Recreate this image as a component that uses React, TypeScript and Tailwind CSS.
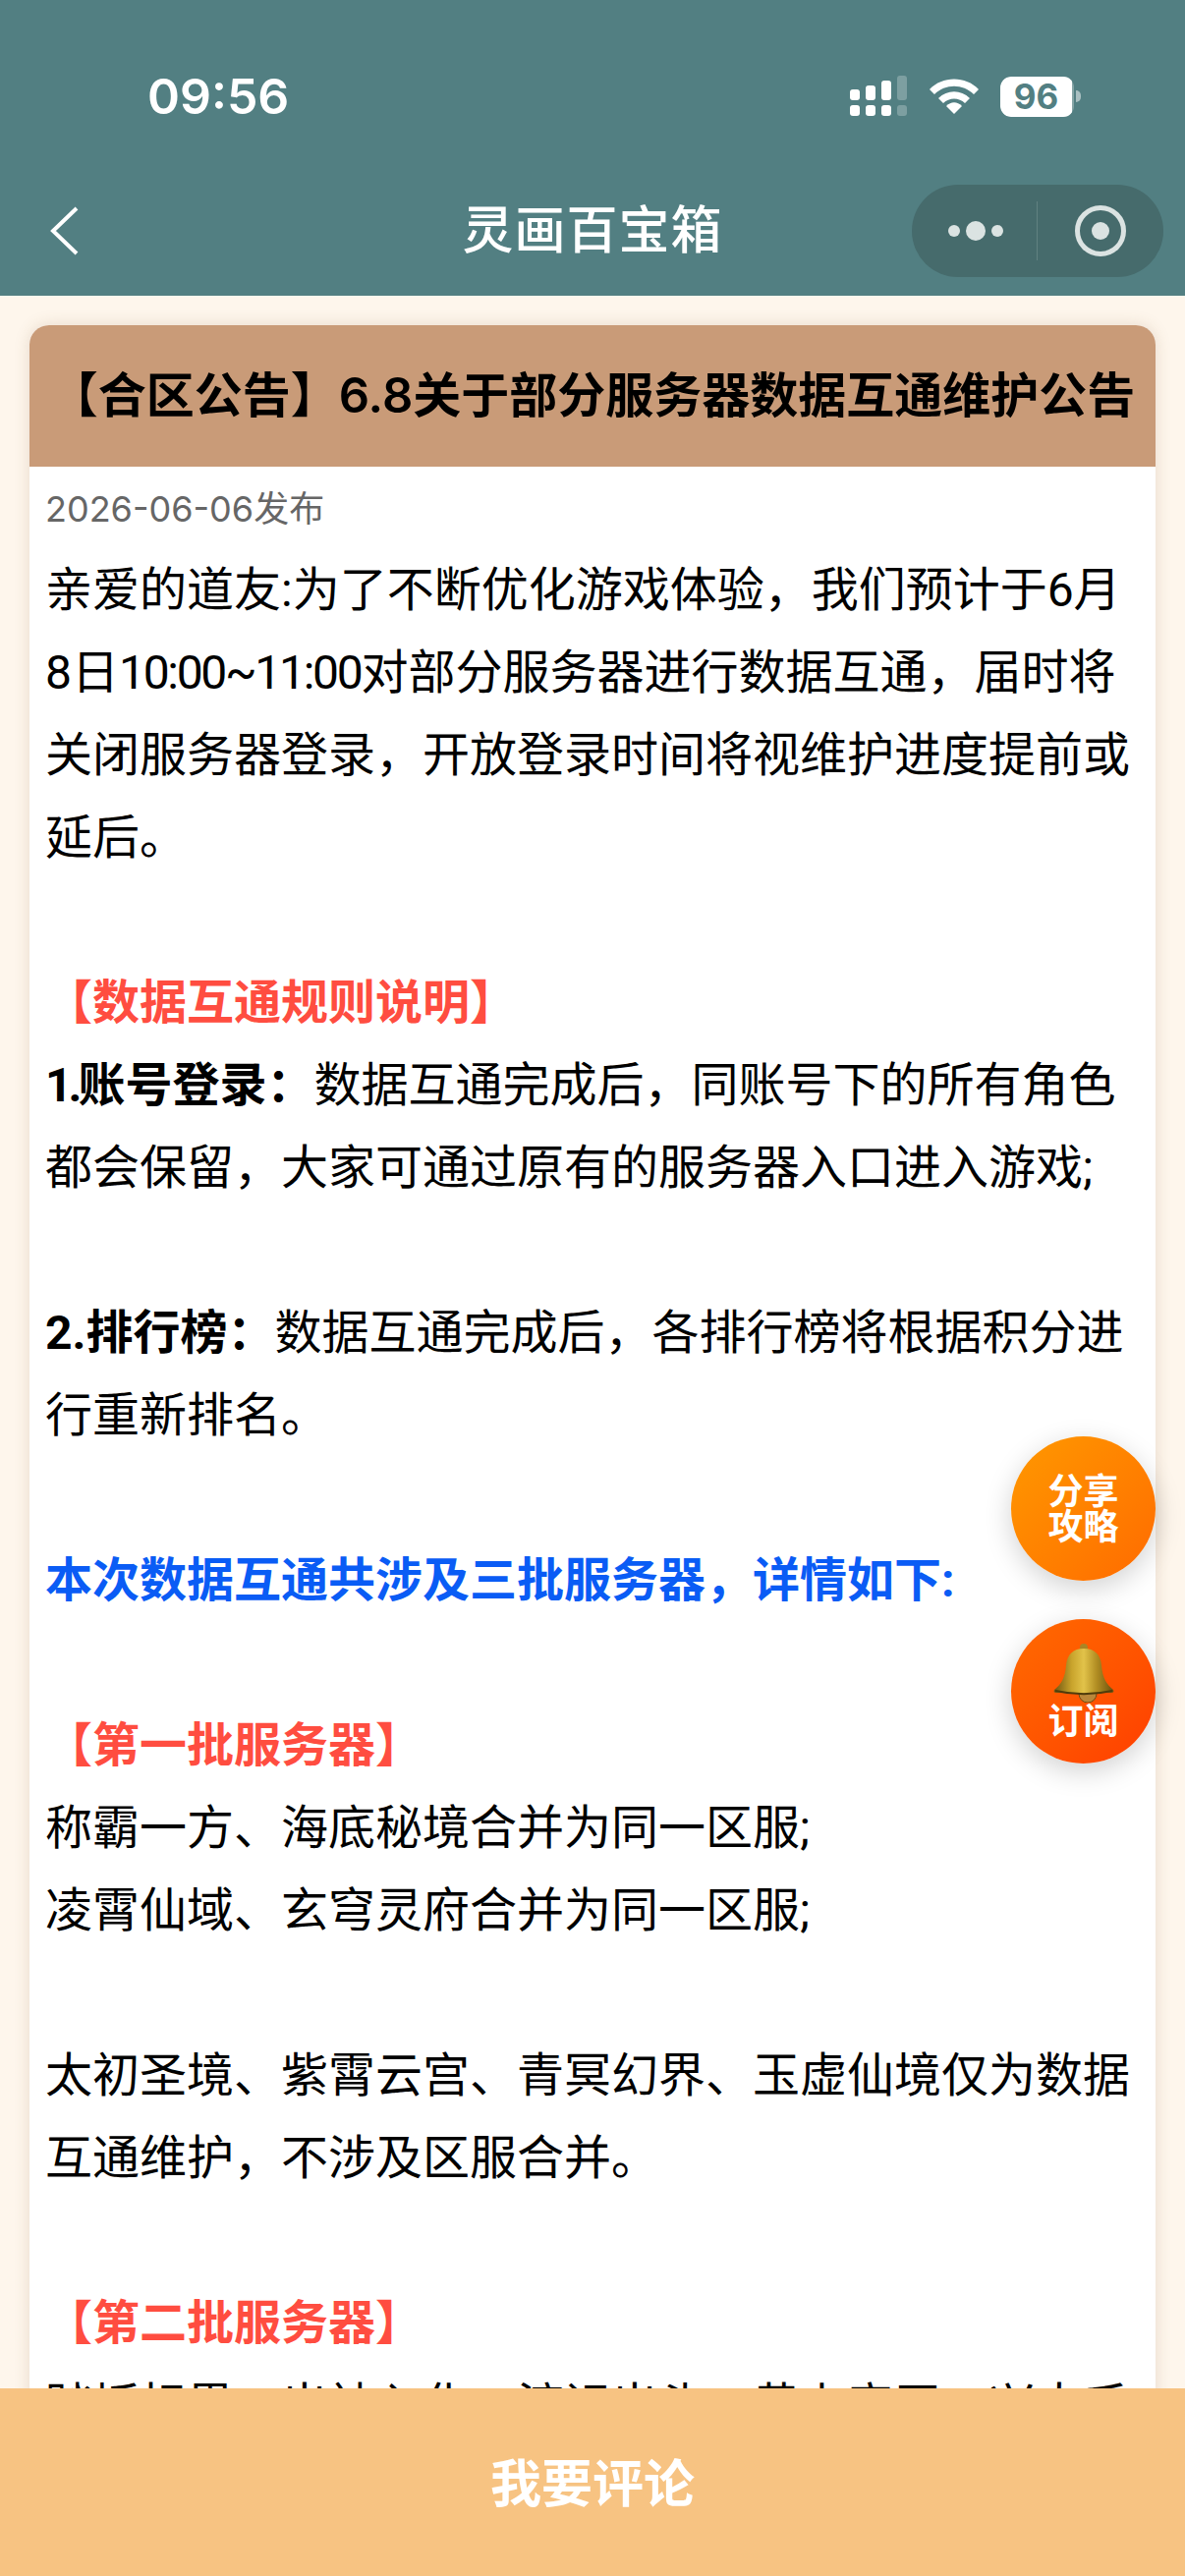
const CJK = "font-['Inter','Noto_Sans_CJK_SC',sans-serif]";

function StatusIcons() {
  return (
    <div className="flex items-center">
      <svg width="60" height="42" viewBox="0 0 60 42" fill="white">
        <rect x="0" y="14" width="10" height="11" rx="3" />
        <rect x="16" y="10" width="10" height="15" rx="3" />
        <rect x="32" y="5" width="10" height="20" rx="3" />
        <rect x="48" y="0" width="10" height="25" rx="3" opacity="0.25" />
        <rect x="0" y="30" width="10" height="11" rx="3" />
        <rect x="16" y="30" width="10" height="11" rx="3" />
        <rect x="32" y="30" width="10" height="11" rx="3" />
        <rect x="48" y="30" width="10" height="11" rx="3" opacity="0.25" />
      </svg>
      <svg className="ml-[20px]" width="52" height="38" viewBox="0 0 52 38" fill="white">
        <path d="M1 12 C14 -2 38 -2 51 12 L46 17 C35 6 17 6 6 17 Z" />
        <path d="M10 21 C19 12 33 12 42 21 L37 26 C31 20 21 20 15 26 Z" />
        <path d="M18 29 C23 24 29 24 34 29 L26 37 Z" />
      </svg>
      <div className="ml-[21px] flex items-center">
        <div className="h-[41px] w-[75px] overflow-hidden rounded-[11px] bg-white/30">
          <div className="flex h-full w-[73px] items-center justify-center rounded-l-[11px] rounded-r-[4px] bg-white text-[35px] leading-none font-bold text-[#527f82]">
            96
          </div>
        </div>
        <div className="ml-[2px] h-[12px] w-[5px] rounded-r-full bg-white/50" />
      </div>
    </div>
  );
}

function Capsule() {
  return (
    <div className="flex h-[94px] w-[256px] items-center rounded-full bg-[#466b6c]">
      <div className="flex h-[60px] w-[128px] items-center justify-center gap-[4px] border-r border-white/15 pl-[2px]">
        <svg width="64" height="20" viewBox="0 0 64 20" fill="#dbe3e2">
          <circle cx="10" cy="10" r="6" />
          <circle cx="32" cy="10" r="10" />
          <circle cx="54" cy="10" r="6" />
        </svg>
      </div>
      <div className="flex flex-1 items-center justify-center">
        <svg width="54" height="54" viewBox="0 0 54 54" fill="none">
          <circle cx="27" cy="27" r="23.5" stroke="#dbe3e2" strokeWidth="5" />
          <circle cx="27" cy="27" r="9" fill="#dbe3e2" />
        </svg>
      </div>
    </div>
  );
}

function Bell() {
  return (
    <svg width="62" height="60" viewBox="0 0 62 60">
      <defs>
        <linearGradient id="bellBody" x1="0" y1="0" x2="1" y2="0">
          <stop offset="0" stopColor="#6f5510" />
          <stop offset="0.3" stopColor="#c9a42c" />
          <stop offset="0.5" stopColor="#e2c34a" />
          <stop offset="0.72" stopColor="#b08c22" />
          <stop offset="1" stopColor="#6a500f" />
        </linearGradient>
      </defs>
      <circle cx="31" cy="4" r="4" fill="#a98525" />
      <circle cx="35" cy="51" r="9" fill="#b9873a" stroke="#6a4d16" strokeWidth="1" />
      <path
        d="M31 5 C20 5 14 11 13 22 C12 35 8 41 1 47 C0 49 1 50 3 50 L59 50 C61 50 62 49 61 47 C54 41 50 35 49 22 C48 11 42 5 31 5 Z"
        fill="url(#bellBody)"
      />
      <path d="M2 48 C20 52 42 52 60 48" stroke="#4f3c0c" strokeWidth="2" fill="none" />
    </svg>
  );
}

function Red({ children }: { children: React.ReactNode }) {
  return <p className="font-bold text-[#ff4d40]">{children}</p>;
}

const Blank = () => <p className="h-[84px]" />;

export default function App() {
  return (
    <div className={`relative flex h-[2622px] w-[1206px] flex-col overflow-hidden bg-[#fef6ec] ${CJK}`}>
      <header className="flex h-[301px] shrink-0 flex-col bg-[#527f82] text-white">
        <div className="flex h-[188px] items-start justify-between pt-[70px] pr-[106px] pl-[150px]">
          <span className="text-[50px] leading-[56px] font-semibold">09:56</span>
          <div className="pt-[7px]">
            <StatusIcons />
          </div>
        </div>
        <div className="grid grid-cols-[256px_1fr_256px] items-start px-[22px]">
          <svg className="mt-[22px] ml-[28px]" width="30" height="50" viewBox="0 0 30 50" fill="none">
            <path d="M28 2 L4 25 L28 48" stroke="white" strokeWidth="4" />
          </svg>
          <h1 className="mt-[17px] text-center text-[52px] leading-[60px] font-medium tracking-[1px]">灵画百宝箱</h1>
          <Capsule />
        </div>
      </header>

      <main className="flex-1 overflow-hidden px-[30px] pt-[30px]">
        <article className="rounded-t-[20px] bg-white shadow-[0_0_16px_rgba(120,90,50,0.18)]">
          <h2 className="flex h-[144px] items-center justify-center rounded-t-[20px] bg-[#c99b78] text-[49px] font-semibold whitespace-nowrap text-black">
            【合区公告】6.8关于部分服务器数据互通维护公告
          </h2>
          <div className="px-[16px] pt-[19px] font-['Roboto','Noto_Sans_CJK_SC',sans-serif] text-[48px] leading-[84px] text-black">
            <div className="mb-[17px] font-['Inter','Noto_Sans_CJK_SC',sans-serif] text-[36px] leading-[48px] text-[#666666]">2026-06-06发布</div>
            <p>亲爱的道友:为了不断优化游戏体验，我们预计于6月8日<span className="tracking-[-2.3px]">10:00~11:00</span>对部分服务器进行数据互通，届时将关闭服务器登录，开放登录时间将视维护进度提前或延后。</p>
            <Blank />
            <Red>【数据互通规则说明】</Red>
            <p><b className="font-bold"><span className="tracking-[-4px]">1.</span>账号登录：</b>数据互通完成后，同账号下的所有角色都会保留，大家可通过原有的服务器入口进入游戏;</p>
            <Blank />
            <p><b className="font-bold">2.排行榜：</b>数据互通完成后，各排行榜将根据积分进行重新排名。</p>
            <Blank />
            <p className="font-bold text-[#0a5cf5]">本次数据互通共涉及三批服务器，详情如下:</p>
            <Blank />
            <Red>【第一批服务器】</Red>
            <p>称霸一方、海底秘境合并为同一区服;</p>
            <p>凌霄仙域、玄穹灵府合并为同一区服;</p>
            <Blank />
            <p>太初圣境、紫霄云宫、青冥幻界、玉虚仙境仅为数据互通维护，不涉及区服合并。</p>
            <Blank />
            <Red>【第二批服务器】</Red>
            <p>踏坂标界、出神入化、渡识出头、黄上帝王、兴太千</p>
          </div>
        </article>
      </main>

      <footer className="flex h-[191px] shrink-0 items-center justify-center bg-[#f7c382] pt-[4px] text-[52px] font-semibold text-white">
        我要评论
      </footer>

      {/* floating buttons */}
      <div className="absolute top-[1462px] right-[30px] flex flex-col gap-[39px]">
        <div className="flex h-[147px] w-[147px] flex-col items-center justify-center rounded-full bg-gradient-to-br from-[#ff9800] to-[#ff6a00] text-[36px] leading-[36px] font-semibold text-white shadow-[0_8px_28px_rgba(0,0,0,0.18)]">
          <span>分享</span>
          <span>攻略</span>
        </div>
        <div className="flex h-[147px] w-[147px] flex-col items-center justify-center rounded-full bg-gradient-to-br from-[#ff6a00] to-[#ff3d00] text-[36px] leading-[38px] font-semibold text-white shadow-[0_8px_28px_rgba(0,0,0,0.18)]">
          <Bell />
          <span>订阅</span>
        </div>
      </div>
    </div>
  );
}
